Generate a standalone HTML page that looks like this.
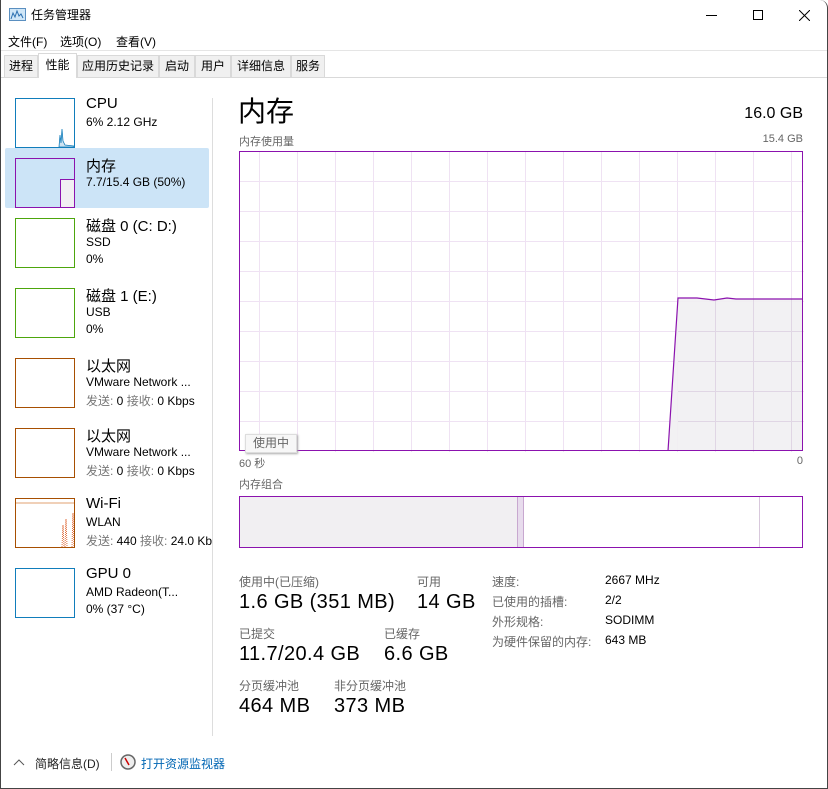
<!DOCTYPE html>
<html><head><meta charset="utf-8"><style>
*{margin:0;padding:0;box-sizing:border-box}
body{width:828px;height:789px;overflow:hidden;background:#fff;font-family:"Liberation Sans","Noto Sans CJK SC",sans-serif;color:#000;position:relative}
.a{position:absolute;white-space:nowrap}
.tab{position:absolute;top:55px;height:22px;background:#f0f0f0;border:1px solid #d9d9d9;border-bottom:none;font-size:12px;line-height:20px;text-align:center}
.thumb{position:absolute;left:15px;width:60px;height:50px;border:1px solid}
.n1{font-size:15px}
.n2{font-size:12px}
.g{color:#777}
.lbl{font-size:12px;color:#666}
.big{font-size:20px;letter-spacing:0.4px}
</style></head><body>
<div class="a" style="left:0;top:0;width:828px;height:789px;border:1px solid #444;border-top:none;border-radius:0 8px 0 0;"></div>
<svg class="a" style="left:9px;top:8px" width="17" height="13"><rect x="0.5" y="0.5" width="16" height="12" fill="#cfe6f7" stroke="#5a8fc0"/><path d="M2 11 L4 5 L6 9 L8 3 L10 8 L12 6 L14 10" stroke="#2a6fb0" fill="none"/></svg>
<div class="a" style="left:31px;top:6px;font-size:12px">任务管理器</div>
<div class="a" style="left:706px;top:15px;width:11px;height:1px;background:#000"></div>
<div class="a" style="left:753px;top:10px;width:10px;height:10px;border:1px solid #000"></div>
<svg class="a" style="left:799px;top:10px" width="11" height="11"><path d="M0 0L11 11M11 0L0 11" stroke="#000" stroke-width="1"/></svg>
<div class="a" style="left:8px;top:33px;font-size:12px">文件(F)</div>
<div class="a" style="left:60px;top:33px;font-size:12px">选项(O)</div>
<div class="a" style="left:116px;top:33px;font-size:12px">查看(V)</div>
<div class="a" style="left:1px;top:50px;width:826px;height:1px;background:#e5e5e5"></div>
<div class="a" style="left:1px;top:77px;width:826px;height:1px;background:#d9d9d9"></div>
<div class="tab" style="left:4px;width:34px">进程</div>
<div class="tab" style="left:38px;top:53px;width:39px;height:25px;background:#fff;line-height:22px">性能</div>
<div class="tab" style="left:77px;width:82px">应用历史记录</div>
<div class="tab" style="left:159px;width:36px">启动</div>
<div class="tab" style="left:195px;width:36px">用户</div>
<div class="tab" style="left:231px;width:60px">详细信息</div>
<div class="tab" style="left:291px;width:34px">服务</div>
<div class="a" style="left:212px;top:98px;width:1px;height:638px;background:#ddd"></div>
<div class="a" style="left:5px;top:148px;width:204px;height:60px;background:#cce4f7;border-radius:2px"></div>
<div class="thumb" style="top:98px;border-color:#117dbb"><svg width="58" height="48" style="position:absolute;left:0;top:0"><path d="M43 48 L44 36 L45 44 L46 30 L47 42 L49 46 L58 47 L58 48Z" fill="#cfe3f1" stroke="#117dbb" stroke-width="0.8"/></svg></div>
<div class="a n1" style="left:86px;top:95px">CPU</div>
<div class="a n2" style="left:86px;top:115px">6% 2.12 GHz</div>
<div class="thumb" style="top:158px;border-color:#8b12ae"><div style="position:absolute;left:44px;top:20px;width:14px;height:28px;background:#f1eff2;border-left:1px solid #8b12ae;border-top:1px solid #8b12ae"></div></div>
<div class="a n1" style="left:86px;top:155px">内存</div>
<div class="a n2" style="left:86px;top:175px">7.7/15.4 GB (50%)</div>
<div class="thumb" style="top:218px;border-color:#4da60c"></div>
<div class="a n1" style="left:86px;top:215px">磁盘 0 (C: D:)</div>
<div class="a n2" style="left:86px;top:235px">SSD</div>
<div class="a n2" style="left:86px;top:252px">0%</div>
<div class="thumb" style="top:288px;border-color:#4da60c"></div>
<div class="a n1" style="left:86px;top:285px">磁盘 1 (E:)</div>
<div class="a n2" style="left:86px;top:305px">USB</div>
<div class="a n2" style="left:86px;top:322px">0%</div>
<div class="thumb" style="top:358px;border-color:#a74f01"></div>
<div class="a n1" style="left:86px;top:355px">以太网</div>
<div class="a n2" style="left:86px;top:375px">VMware Network ...</div>
<div class="a n2" style="left:86px;top:392px"><span class="g">发送:</span> 0 <span class="g">接收:</span> 0 Kbps</div>
<div class="thumb" style="top:428px;border-color:#a74f01"></div>
<div class="a n1" style="left:86px;top:425px">以太网</div>
<div class="a n2" style="left:86px;top:445px">VMware Network ...</div>
<div class="a n2" style="left:86px;top:462px"><span class="g">发送:</span> 0 <span class="g">接收:</span> 0 Kbps</div>
<div class="thumb" style="top:498px;border-color:#a74f01"><svg width="58" height="48" style="position:absolute;left:0;top:0"><path d="M0 4H58" stroke="#e0a070"/><path d="M46 48 L47 26 L48 48 M49 48 L50 20 L51 48 M56 48 L57 14 L58 48" stroke="#e07040" stroke-dasharray="1 1" fill="none"/></svg></div>
<div class="a n1" style="left:86px;top:495px">Wi-Fi</div>
<div class="a n2" style="left:86px;top:515px">WLAN</div>
<div class="a n2" style="left:86px;top:532px;width:126px;overflow:hidden"><span class="g">发送:</span> 440 <span class="g">接收:</span> 24.0 Kbps</div>
<div class="thumb" style="top:568px;border-color:#117dbb"></div>
<div class="a n1" style="left:86px;top:565px">GPU 0</div>
<div class="a n2" style="left:86px;top:585px">AMD Radeon(T...</div>
<div class="a n2" style="left:86px;top:602px">0% (37 °C)</div>
<div class="a" style="left:238px;top:90px;font-size:28px">内存</div>
<div class="a" style="right:25px;top:105px;font-size:16px">16.0 GB</div>
<div class="a lbl" style="left:239px;top:133px;font-size:11px">内存使用量</div>
<div class="a lbl" style="right:25px;top:133px;font-size:11px">15.4 GB</div>
<svg class="a" style="left:239px;top:151px" width="565" height="301">
<g stroke="#efe2f3" stroke-width="1">
<path d="M20.5 0V301M58.5 0V301M96.5 0V301M134.5 0V301M172.5 0V301M210.5 0V301M248.5 0V301M286.5 0V301M324.5 0V301M362.5 0V301M400.5 0V301M438.5 0V301M476.5 0V301M514.5 0V301M552.5 0V301"/>
<path d="M0 30.5H565M0 60.5H565M0 90.5H565M0 120.5H565M0 150.5H565M0 180.5H565M0 210.5H565M0 240.5H565M0 270.5H565"/>
</g>
<path d="M429 300 L439 147 L458 147 L475 149 L488 147 L497 148 L564 148 L564 300Z" fill="#f1eff2" fill-opacity="0.9"/>
<g stroke="#e0d6e4"><path d="M476.5 149V300M514.5 148V300M552.5 148V300M439 180.5H564M439 210.5H564M439 240.5H564M439 270.5H564"/></g>
<path d="M429 300 L439 147 L458 147 L475 149 L488 147 L497 148 L564 148" fill="none" stroke="#8b12ae" stroke-width="1.2"/>
<rect x="0.5" y="0.5" width="563" height="299" fill="none" stroke="#8b12ae"/>
</svg>
<div class="a" style="left:245px;top:434px;width:52px;height:19px;background:#f7f7f7;border:1px solid #ddd;box-shadow:1px 1px 2px #aaa;font-size:12px;color:#666;text-align:center;line-height:17px">使用中</div>
<div class="a lbl" style="left:239px;top:455px;font-size:11px">60 秒</div>
<div class="a lbl" style="right:25px;top:455px;font-size:11px">0</div>
<div class="a lbl" style="left:239px;top:476px;font-size:11px">内存组合</div>
<div class="a" style="left:239px;top:496px;width:564px;height:52px;border:1px solid #8b12ae">
<div style="position:absolute;left:0;top:0;width:278px;height:50px;background:#f1eff2;border-right:1px solid #c8a8d0"></div>
<div style="position:absolute;left:278px;top:0;width:6px;height:50px;background:#e8dced;border-right:1px solid #c8a8d0"></div>
<div style="position:absolute;left:519px;top:0;width:1px;height:50px;background:#d8c8dc"></div>
</div>
<div class="a lbl" style="left:239px;top:573px">使用中(已压缩)</div>
<div class="a big" style="left:239px;top:591px">1.6 GB (351 MB)</div>
<div class="a lbl" style="left:417px;top:573px">可用</div>
<div class="a big" style="left:417px;top:591px">14 GB</div>
<div class="a lbl" style="left:239px;top:625px">已提交</div>
<div class="a big" style="left:239px;top:643px">11.7/20.4 GB</div>
<div class="a lbl" style="left:384px;top:625px">已缓存</div>
<div class="a big" style="left:384px;top:643px">6.6 GB</div>
<div class="a lbl" style="left:239px;top:677px">分页缓冲池</div>
<div class="a big" style="left:239px;top:695px">464 MB</div>
<div class="a lbl" style="left:334px;top:677px">非分页缓冲池</div>
<div class="a big" style="left:334px;top:695px">373 MB</div>
<div class="a lbl" style="left:492px;top:573px">速度:</div>
<div class="a n2" style="left:605px;top:573px">2667 MHz</div>
<div class="a lbl" style="left:492px;top:593px">已使用的插槽:</div>
<div class="a n2" style="left:605px;top:593px">2/2</div>
<div class="a lbl" style="left:492px;top:613px">外形规格:</div>
<div class="a n2" style="left:605px;top:613px">SODIMM</div>
<div class="a lbl" style="left:492px;top:633px">为硬件保留的内存:</div>
<div class="a n2" style="left:605px;top:633px">643 MB</div>
<svg class="a" style="left:13px;top:758px" width="12" height="8"><path d="M1 7L6 2L11 7" stroke="#555" fill="none"/></svg>
<div class="a" style="left:35px;top:755px;font-size:12px;color:#222">简略信息(D)</div>
<div class="a" style="left:111px;top:753px;width:1px;height:18px;background:#ccc"></div>
<svg class="a" style="left:120px;top:754px" width="16" height="16"><circle cx="8" cy="8" r="7" fill="#eee" stroke="#666" stroke-width="1.5"/><path d="M5 4L9 11" stroke="#c00" stroke-width="1.5"/></svg>
<div class="a" style="left:141px;top:755px;font-size:12px;color:#0066b4">打开资源监视器</div>
</body></html>
